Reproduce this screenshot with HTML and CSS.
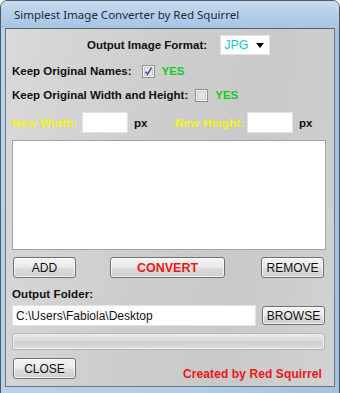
FILE: index.html
```html
<!DOCTYPE html>
<html>
<head>
<meta charset="utf-8">
<link rel="stylesheet" href="styles.css">
</head>
<body>
<div class="window">
  <div class="titlebar">Simplest Image Converter by Red Squirrel</div>
  <div class="client">
    <div class="row format-row">
      <span class="lbl">Output Image Format:</span>
      <div class="combo"><span class="combo-text">JPG</span><svg class="arrow" width="8" height="5" viewBox="0 0 8 5"><path d="M0 0 H8 L4 5 Z" fill="#000"/></svg></div>
    </div>
    <div class="row check-row names-row">
      <span class="lbl">Keep Original Names:</span>
      <span class="check"><svg width="13" height="13" viewBox="0 0 13 13"><rect x="0.5" y="0.5" width="12" height="12" fill="#f4f4f4" stroke="#8e8f8f"/><rect x="2.5" y="2.5" width="8" height="8" fill="#e6e9ee" stroke="#c4cbd6"/><path d="M3.6 6.6 L5.5 9.2 L9.6 2.6" fill="none" stroke="#3c4f8e" stroke-width="1.5"/></svg></span>
      <span class="yes">YES</span>
    </div>
    <div class="row check-row size-row">
      <span class="lbl">Keep Original Width and Height:</span>
      <span class="check"><svg width="13" height="13" viewBox="0 0 13 13"><rect x="0.5" y="0.5" width="12" height="12" fill="#f4f4f4" stroke="#8e8f8f"/><rect x="2.5" y="2.5" width="8" height="8" fill="#e3e3e3" stroke="#cfcfcf"/></svg></span>
      <span class="yes">YES</span>
    </div>
    <div class="row dims-row">
      <span class="ylbl">New Width:</span>
      <span class="box wbox"></span>
      <span class="px px1">px</span>
      <span class="ylbl hlbl">New Height:</span>
      <span class="box hbox"></span>
      <span class="px">px</span>
    </div>
    <div class="listbox"></div>
    <div class="row btn-row">
      <button class="btn small">ADD</button>
      <button class="btn convert">CONVERT</button>
      <button class="btn small remove">REMOVE</button>
    </div>
    <div class="folder-lbl">Output Folder:</div>
    <div class="row path-row">
      <div class="path">C:\Users\Fabiola\Desktop</div>
      <button class="btn browse">BROWSE</button>
    </div>
    <div class="progress"></div>
    <div class="row bottom-row">
      <button class="btn small">CLOSE</button>
      <span class="credit">Created by Red Squirrel</span>
    </div>
  </div>
</div>
</body>
</html>
```
FILE: styles.css
```css
html, body {
  margin: 0;
  padding: 0;
  background: #ffffff;
}
.window {
  width: 338px;
  height: 392px;
  border: 1px solid #4f5a66;
  border-radius: 7px 7px 0 0;
  background: linear-gradient(90deg, #b9d2ec 0%, #aecbe9 60%, #a2c2e4 100%);
  display: flex;
  flex-direction: column;
  overflow: hidden;
}
.titlebar {
  height: 27px;
  flex: none;
  box-sizing: border-box;
  padding: 6px 0 0 13px;
  font-family: "Noto Sans", "Open Sans", sans-serif;
  font-size: 11.5px;
  color: #1e2a36;
  background: linear-gradient(180deg, #c7dcf0 0%, #b5cfe9 50%, #a6c4e4 100%);
}
.client {
  margin: 0 4px 6px 4px;
  flex: 1;
  border: 1px solid #6f747a;
  border-top-color: #5c6167;
  background: linear-gradient(100deg, #d9d9d9 0%, #cecece 40%, #c9c9c9 70%, #d2d2d2 100%);
  padding: 0 8px 0 6px;
  display: flex;
  flex-direction: column;
  font-family: "Liberation Sans", Arial, sans-serif;
  font-size: 11px;
  color: #101010;
}
.row {
  display: flex;
  align-items: center;
}
.lbl {
  font-weight: bold;
  font-size: 11.5px;
}
.format-row {
  margin-top: 6px;
  height: 20px;
  padding-left: 75px;
}
.combo {
  margin-left: 13px;
  width: 50px;
  height: 20px;
  box-sizing: border-box;
  background: #ffffff;
  border: 1px solid #e4e4e4;
  display: flex;
  align-items: center;
  padding-left: 3px;
}
.combo-text {
  color: #22c3d6;
  font-size: 12.5px;
  flex: 1;
}
.arrow {
  margin-right: 5px;
  margin-top: 1px;
}
.check-row {
  height: 20px;
}
.names-row {
  margin-top: 6px;
}
.size-row {
  margin-top: 4px;
}
.check {
  display: flex;
  margin-left: 7px;
  margin-top: 1px;
}
.names-row .check {
  margin-left: 10px;
}
.yes {
  color: #18c91e;
  font-weight: bold;
  font-size: 11.5px;
  margin-left: 7px;
}
.dims-row {
  margin-top: 7px;
  height: 21px;
}
.ylbl {
  color: #f4f414;
  font-weight: bold;
  font-size: 11.5px;
  letter-spacing: 0.3px;
  width: 70px;
}
.hlbl {
  width: 72px;
}
.box {
  background: #ffffff;
  border: 1px solid #e2e2e2;
  box-sizing: border-box;
  height: 21px;
}
.wbox {
  width: 46px;
}
.hbox {
  width: 46px;
}
.px {
  font-weight: bold;
  font-size: 11.5px;
  margin-left: 6px;
}
.px1 {
  width: 41px;
}
.listbox {
  margin-top: 7px;
  height: 110px;
  box-sizing: border-box;
  background: #ffffff;
  border: 1px solid #9fa3a8;
  width: 314px;
}
.btn {
  font-family: "Liberation Sans", Arial, sans-serif;
  font-size: 12px;
  color: #111;
  box-sizing: border-box;
  height: 21px;
  padding: 0;
  border: 1px solid #707070;
  border-radius: 3px;
  background: linear-gradient(180deg, #f3f3f3 0%, #ebebeb 48%, #dddddd 52%, #cfcfcf 100%);
  box-shadow: inset 0 0 0 1px rgba(255,255,255,0.7);
}
.btn-row {
  margin-top: 7px;
  margin-left: 1px;
}
.small {
  width: 63px;
}
.convert {
  width: 115px;
  color: #f01414;
  font-weight: bold;
  font-size: 12.5px;
  margin-left: 34px;
}
.remove {
  margin-left: 36px;
}
.folder-lbl {
  margin-top: 9px;
  font-weight: bold;
  font-size: 11.5px;
  letter-spacing: 0.1px;
  height: 15px;
  line-height: 15px;
}
.path-row {
  margin-top: 3px;
  height: 21px;
}
.path {
  width: 244px;
  height: 21px;
  box-sizing: border-box;
  background: #ffffff;
  border: 1px solid #e2e2e2;
  font-size: 12px;
  padding: 3px 0 0 3px;
  color: #111;
}
.browse {
  margin-left: 6px;
  width: 63px;
  height: 19px;
}
.progress {
  margin-top: 7px;
  height: 17px;
  width: 313px;
  box-sizing: border-box;
  border: 1px solid #b4b4b4;
  border-radius: 3px;
  background: linear-gradient(180deg, #e9e9e9 0%, #dadada 45%, #cfcfcf 55%, #dedede 100%);
  box-shadow: inset 0 0 0 1px #f0f0f0;
}
.bottom-row {
  margin-top: 8px;
  margin-left: 1px;
  align-items: flex-start;
}
.credit {
  margin-left: auto;
  margin-right: 4px;
  margin-top: 9px;
  color: #f01414;
  font-weight: bold;
  font-size: 12px;
  letter-spacing: 0.1px;
}
```
